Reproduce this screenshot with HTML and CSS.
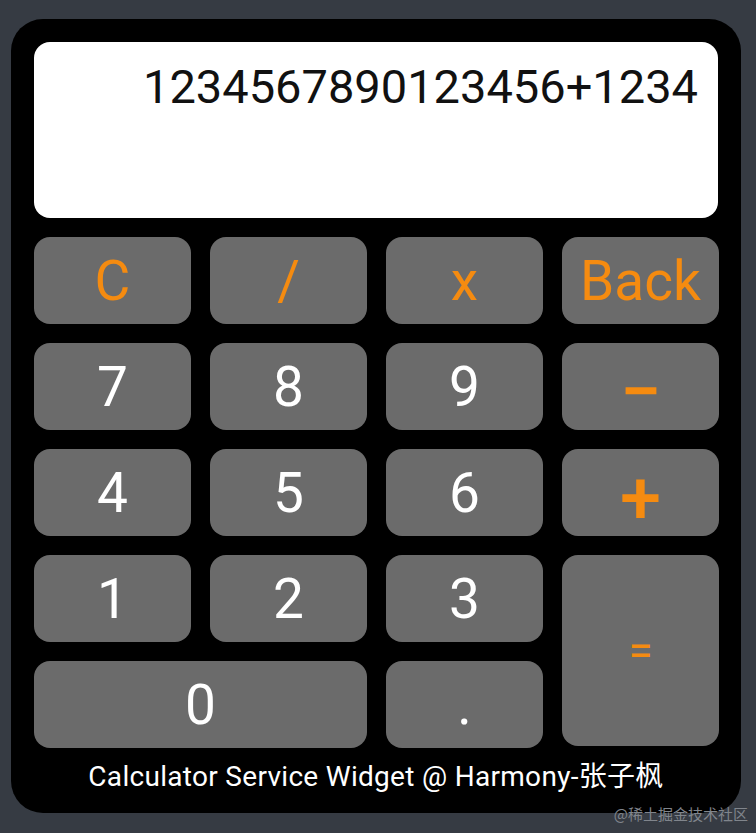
FILE: index.html
```html
<!DOCTYPE html>
<html lang="en">
<head>
    <meta charset="UTF-8">
    <meta name="viewport" content="width=device-width, initial-scale=1.0">
    <title>Calculator Service Widget</title>
    <link rel="stylesheet" href="styles.css">
</head>
<body>

    <!-- Calculator card -->
    <div class="calculator">
        <!-- Display -->
        <div class="display">
            <div class="expression">1234567890123456+1234</div>
        </div>

        <!-- Keypad -->
        <div class="keypad">
            <button class="key op">C</button>
            <button class="key op">/</button>
            <button class="key op">x</button>
            <button class="key op">Back</button>

            <button class="key">7</button>
            <button class="key">8</button>
            <button class="key">9</button>
            <button class="key op heavy">&minus;</button>

            <button class="key">4</button>
            <button class="key">5</button>
            <button class="key">6</button>
            <button class="key op heavy">+</button>

            <button class="key">1</button>
            <button class="key">2</button>
            <button class="key">3</button>
            <button class="key op equals">=</button>

            <button class="key zero">0</button>
            <button class="key">.</button>
        </div>

        <div class="footer">Calculator Service Widget @ Harmony-张子枫</div>
    </div>

    <div class="watermark">@稀土掘金技术社区</div>

</body>
</html>
```

FILE: styles.css
```css
/* Page */
body {
    margin: 0;
    background-color: #363b43;
    font-family: Roboto, "Noto Sans CJK SC", sans-serif;
    width: 756px;
    height: 833px;
    position: relative;
    overflow: hidden;
}

/* Calculator card */
.calculator {
    margin: 19px 0 0 11px;
    width: 730px;
    height: 794px;
    box-sizing: border-box;
    padding: 23px 23px 0 23px;
    background-color: #000;
    border-radius: 32px;
}

/* Display */
.display {
    height: 176px;
    background-color: #fff;
    border-radius: 16px;
    box-sizing: border-box;
    padding: 18px 20px 0 0;
    text-align: right;
}
.display .expression {
    font-size: 47px;
    line-height: 54px;
    color: #111;
}

/* Keypad */
.keypad {
    margin-top: 19px;
    display: grid;
    grid-template-columns: repeat(4, 157px);
    grid-template-rows: repeat(5, 87px);
    column-gap: 19px;
    row-gap: 19px;
}
.key {
    border: none;
    border-radius: 16px;
    background-color: #6b6b6b;
    color: #fff;
    font-family: Roboto, sans-serif;
    font-size: 55px;
    padding: 0;
    display: flex;
    align-items: center;
    justify-content: center;
    cursor: pointer;
}
.key.op {
    color: #f58b10;
}
.key.op.heavy {
    font-weight: 500;
    font-size: 74px;
    padding-top: 10px;
}
.key.equals {
    grid-column: 4;
    grid-row: 4 / span 2;
    font-size: 44px;
    margin-bottom: 2px;
}
.key.zero {
    grid-column: 1 / span 2;
}

/* Footer */
.footer {
    text-align: center;
    color: #fff;
    font-size: 28px;
    letter-spacing: 0.3px;
    line-height: 30px;
    margin-top: 14px;
}

/* Watermark */
.watermark {
    position: absolute;
    right: 8px;
    top: 803px;
    font-size: 15px;
    color: #80858c;
    font-family: "Noto Sans CJK SC", sans-serif;
}
```
